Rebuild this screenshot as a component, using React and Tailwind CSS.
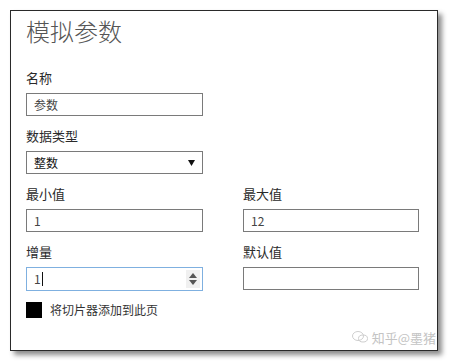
import React from "react";

const font = { fontFamily: '"Noto Sans CJK SC", "Noto Sans", sans-serif' };

function Label({ children }) {
  return <div className="text-[13px] leading-[20px] text-[#2a2a2a] h-[20px]">{children}</div>;
}

function Input({ value, className = "" }) {
  return (
    <div className={`mt-[5px] h-[23px] border border-[#7a7a7a] bg-white flex items-center pl-[7px] text-[12px] text-[#444] ${className}`}>
      {value}
    </div>
  );
}

export default function App() {
  return (
    <div className="w-[450px] h-[363px] bg-white overflow-hidden relative" style={font}>
      <div className="absolute left-[10px] top-[10px] w-[428px] h-[341px] border border-[#2a2a2a] bg-white shadow-[4px_4px_5px_rgba(0,0,0,0.45)]">
        <div className="pl-[15px] pt-[4px] pr-[18px]">
          <div className="text-[24px] leading-[32px] text-[#555] font-light">模拟参数</div>
          <div className="mt-[21px] w-[177px]">
            <Label>名称</Label>
            <Input value="参数" />
          </div>
          <div className="mt-[10px] w-[177px]">
            <Label>数据类型</Label>
            <div className="mt-[5px] h-[23px] border border-[#7a7a7a] bg-white flex items-center justify-between pl-[7px] pr-[7px] text-[12px] text-[#111]">
              <span>整数</span>
              <svg width="7" height="6" viewBox="0 0 7 6"><polygon points="0,0 7,0 3.5,6" fill="#111" /></svg>
            </div>
          </div>
          <div className="mt-[10px] grid grid-cols-[177px_176px] gap-x-[40px]">
            <div>
              <Label>最小值</Label>
              <Input value="1" />
            </div>
            <div>
              <Label>最大值</Label>
              <Input value="12" />
            </div>
            <div className="mt-[10px]">
              <Label>增量</Label>
              <div className="mt-[5px] h-[24px] border border-[#7fb0e0] bg-white flex items-center justify-between pl-[7px] pr-[2px] text-[12px] text-[#444]">
                <span className="flex items-center">1<span className="inline-block w-px h-[14px] bg-[#111] ml-[1px]"></span></span>
                <div className="w-[14px] h-[18px] bg-[#f0f0f0] flex flex-col items-center justify-center gap-[2px]">
                  <svg width="8" height="5" viewBox="0 0 8 5"><polygon points="4,0 8,5 0,5" fill="#555" /></svg>
                  <svg width="8" height="5" viewBox="0 0 8 5"><polygon points="0,0 8,0 4,5" fill="#555" /></svg>
                </div>
              </div>
            </div>
            <div className="mt-[10px]">
              <Label>默认值</Label>
              <Input value="" />
            </div>
          </div>
          <div className="mt-[10px] flex items-center gap-[8px]">
            <div className="w-[16px] h-[16px] bg-black"></div>
            <span className="text-[12px] text-[#333]">将切片器添加到此页</span>
          </div>
        </div>
        <div className="absolute right-[1px] bottom-[3px] flex items-center gap-[4px] text-[13px] text-[#c4c4c4]">
          <svg width="16" height="12" viewBox="0 0 16 12">
            <ellipse cx="6" cy="5" rx="5.5" ry="4.5" fill="none" stroke="#cfcfcf" strokeWidth="1" />
            <ellipse cx="11" cy="7.5" rx="4.5" ry="3.5" fill="none" stroke="#cfcfcf" strokeWidth="1" />
          </svg>
          <span>知乎@墨猪</span>
        </div>
      </div>
    </div>
  );
}
